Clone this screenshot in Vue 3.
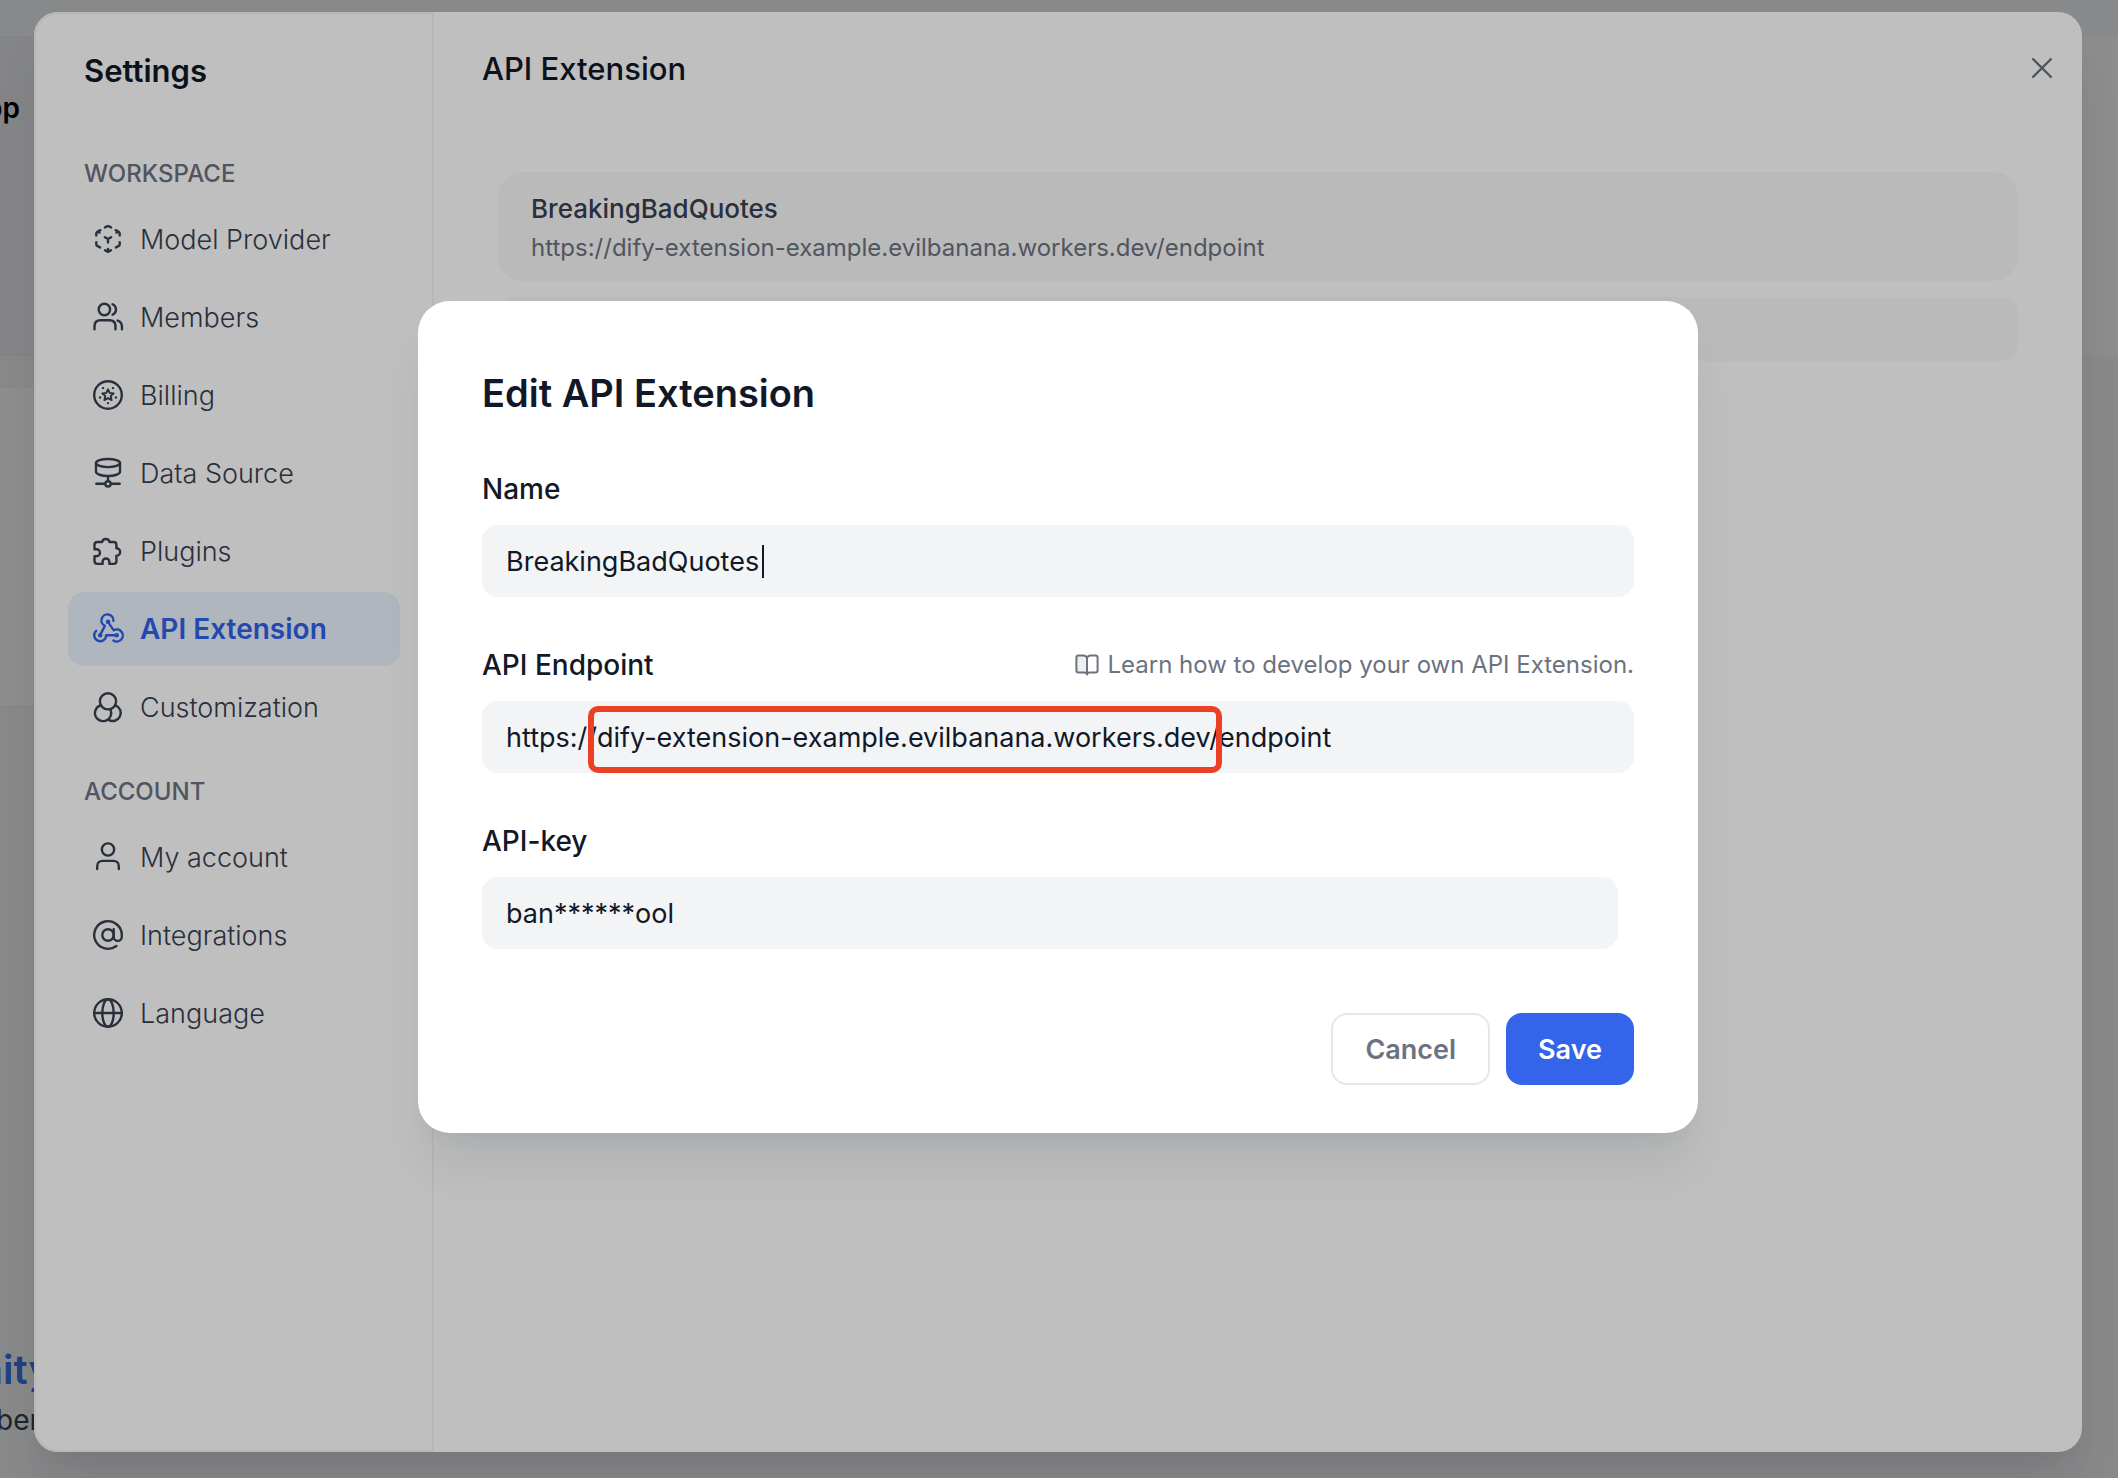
<script setup>
import { ref } from 'vue'

const groups = [
  {
    title: 'WORKSPACE',
    items: [
      { icon: 'model', label: 'Model Provider' },
      { icon: 'members', label: 'Members' },
      { icon: 'billing', label: 'Billing' },
      { icon: 'data', label: 'Data Source' },
      { icon: 'plugins', label: 'Plugins' },
      { icon: 'api', label: 'API Extension', active: true },
      { icon: 'custom', label: 'Customization' },
    ],
  },
  {
    title: 'ACCOUNT',
    items: [
      { icon: 'account', label: 'My account' },
      { icon: 'integrations', label: 'Integrations' },
      { icon: 'language', label: 'Language' },
    ],
  },
]

const icons = {
  model:
    '<path d="M9.9 4.3 11.2 3.6Q12 3.2 12.8 3.6L14.1 4.3M6.9 6.1 5.1 7M4.2 9.6V8.2L5.1 7 6.3 7.7M17.1 6.1 18.9 7M19.8 9.6V8.2L18.9 7 17.7 7.7M4.2 14.2V15.6Q4.2 16.3 4.8 16.6L6.7 17.6M19.8 14.2V15.6Q19.8 16.3 19.2 16.6L17.3 17.6M9.9 10.8 12 12 14.1 10.8M12 12V14.4M12 18.6V20.6M10 19.5 12 20.6 14 19.5"/>',
  members:
    '<circle cx="9.6" cy="7" r="3.8"/><path d="M3 20.2V18.2Q3 14.2 7 14.2H13Q17 14.2 17 18.2V20.2M15 3.5A3.8 3.8 0 0 1 15 10.5M18.4 14.4Q21.3 15.4 21.3 18.4V20.2"/>',
  billing:
    '<circle cx="12" cy="12" r="9.2"/><path stroke-width="1.3" d="m12 8.2 1.1 2.4 2.7.3-2 1.8.6 2.7-2.4-1.3-2.4 1.3.6-2.7-2-1.8 2.7-.3Z"/><g fill="currentColor" stroke="none"><circle cx="8.7" cy="7.4" r=".8"/><circle cx="15.3" cy="7.4" r=".8"/><circle cx="6.7" cy="13.7" r=".8"/><circle cx="17.3" cy="13.7" r=".8"/><circle cx="12" cy="17.4" r=".8"/></g>',
  data:
    '<ellipse cx="12" cy="5.4" rx="8" ry="2.7"/><path d="M4 5.4V11.2C4 12.7 7.6 14 12 14S20 12.7 20 11.2V5.4M12 14V17.4M4.2 19.2H10M14 19.2H19.8"/><circle cx="12" cy="19.2" r="1.8"/>',
  plugins:
    '<path d="M8.1 6A2.5 2.5 0 0 1 13 6H15.8Q17.6 6 17.6 7.8V10.2A2.4 2.4 0 0 1 17.6 15.2V18.9Q17.6 20.6 15.8 20.6H12.9V19.2A2.2 2.2 0 0 0 8.4 19.2V20.6H4.9Q3 20.6 3 18.7V15.5H4.3A2.3 2.3 0 0 0 4.3 10.8H3V7.8Q3 6 4.9 6Z"/>',
  api:
    '<path d="M15.6 6.6A4 4 0 1 0 9.9 9.9L7 15.6M12 7.2 15.8 12.9A4 4 0 1 1 15.6 19.6M17.7 16.2H10.8A4 4 0 1 1 4.1 13.2"/><g fill="currentColor" stroke="none"><circle cx="12" cy="7.2" r="1.5"/><circle cx="6.8" cy="16.2" r="1.5"/><circle cx="17.8" cy="16.2" r="1.5"/></g>',
  custom:
    '<circle cx="12" cy="8.2" r="5.4"/><path d="M7 10.9A5.4 5.4 0 1 0 13.5 18.5C14.4 16.6 14.2 14.8 13.4 13.6M17 10.9A5.4 5.4 0 1 1 12.2 20.5"/>',
  account:
    '<circle cx="12" cy="7" r="4.1"/><path d="M4.8 20V18.2Q4.8 14.6 8.6 14.6H15.4Q19.2 14.6 19.2 18.2V20"/>',
  integrations:
    '<circle cx="12" cy="12" r="3.8"/><path d="M15.8 8.2V13.2A2.7 2.7 0 0 0 21.2 13.2V12A9.2 9.2 0 1 0 17.6 19.3"/>',
  language:
    '<circle cx="12" cy="12" r="9.2"/><path d="M2.8 12H21.2"/><ellipse cx="12" cy="12" rx="3.8" ry="9.2"/>',
}

const name = ref('BreakingBadQuotes')
const endpoint = ref('https://dify-extension-example.evilbanana.workers.dev/endpoint')
const apiKey = ref('ban******ool')
</script>

<template>
  <div class="page">
    <div class="backdrop" aria-hidden="true">
      <div class="topbar"></div>
      <div class="hero">
        <div class="hero-card"><span>App</span></div>
      </div>
      <div class="gap"></div>
      <div class="tile"></div>
      <div class="footer">
        <strong>Community</strong>
        <span>member</span>
      </div>
    </div>

    <div class="overlay settings-overlay">
      <section class="settings">
        <nav class="sidebar">
          <h1>Settings</h1>
          <div v-for="g in groups" :key="g.title" class="group">
            <h2>{{ g.title }}</h2>
            <a
              v-for="item in g.items"
              :key="item.label"
              href="#"
              class="item"
              :class="{ active: item.active }"
            >
              <svg viewBox="0 0 24 24" v-html="icons[item.icon]"></svg>
              <span>{{ item.label }}</span>
            </a>
          </div>
        </nav>
        <main class="content">
          <header>
            <h2>API Extension</h2>
            <button type="button" class="close" aria-label="Close">
              <svg viewBox="0 0 18 18"><path d="M1 1 17 17M17 1 1 17" /></svg>
            </button>
          </header>
          <div class="list">
            <article class="card">
              <h3>{{ name }}</h3>
              <p>{{ endpoint }}</p>
            </article>
            <button type="button" class="add" aria-label="Add"></button>
          </div>
        </main>
      </section>
    </div>

    <div class="overlay dialog-overlay">
      <form class="dialog" @submit.prevent>
        <h2>Edit API Extension</h2>
        <div class="field">
          <div class="label-row"><label for="name">Name</label></div>
          <div class="control">
            <input id="name" v-model="name" type="text" />
            <i class="caret"></i>
          </div>
        </div>
        <div class="field">
          <div class="label-row">
            <label for="endpoint">API Endpoint</label>
            <a href="#" class="learn">
              <svg viewBox="0 0 24 24">
                <path fill="#eeeff1" stroke="none" d="M2 3H9.5L12 5V20H2Z" />
                <path d="M12 5Q11 2.4 8.5 2.4H3.4Q1.4 2.4 1.4 4.4V17.4Q1.4 19.4 3.4 19.4H9.6Q11.4 19.4 12 21.6 12.6 19.4 14.4 19.4H20.6Q22.6 19.4 22.6 17.4V4.4Q22.6 2.4 20.6 2.4H15.5Q13 2.4 12 5ZM12 5V20.6" />
              </svg>
              <span>Learn how to develop your own API Extension.</span>
            </a>
          </div>
          <div class="control">
            <input id="endpoint" v-model="endpoint" type="text" />
            <i class="marker"></i>
          </div>
        </div>
        <div class="field">
          <div class="label-row"><label for="key">API-key</label></div>
          <div class="control short"><input id="key" v-model="apiKey" type="text" /></div>
        </div>
        <div class="actions">
          <button type="button" class="cancel">Cancel</button>
          <button type="submit" class="save">Save</button>
        </div>
      </form>
    </div>
  </div>
</template>

<style>
body {
  margin: 0;
}
</style>

<style scoped>
* {
  box-sizing: border-box;
}
.page {
  position: relative;
  min-height: 100vh;
  overflow: hidden;
  background: #f3f4f6;
  color: #111827;
  font-family: Inter, 'Liberation Sans', sans-serif;
  font-size: 27px;
}
h1, h2, h3, p {
  margin: 0;
}
a {
  color: inherit;
  text-decoration: none;
}
button, input {
  font: inherit;
  border: 0;
}
svg {
  flex: none;
  fill: none;
  stroke: currentColor;
  stroke-width: 1.6;
  stroke-linecap: round;
  stroke-linejoin: round;
}

/* Page behind the dialogs */
.backdrop {
  display: flex;
  flex-direction: column;
}
.topbar {
  height: 36px;
}
.hero {
  height: 320px;
  background: #fbfbfb;
}
.hero-card {
  display: flex;
  justify-content: flex-end;
  width: 50%;
  height: 320px;
  padding: 51px 1039px 0 0;
  border-top: 1px solid #e8eaed;
  border-bottom: 1px solid #e5e7eb;
  background: #eceef2;
  color: #000;
  font-size: 28px;
  font-weight: 600;
  line-height: 40px;
}
.gap {
  height: 32px;
}
.tile {
  width: 50%;
  height: 320px;
  border-bottom: 2px solid #eaecf0;
  background: #fdfdfd;
}
.footer {
  display: flex;
  flex-direction: column;
  align-items: flex-end;
  width: 52px;
  padding-top: 634px;
}
.footer strong {
  color: #3b76e8;
  font-size: 40px;
  font-weight: 600;
  line-height: 56px;
}
.footer span {
  padding-right: 12px;
  color: #374151;
  font-size: 28px;
  line-height: 44px;
}

.overlay {
  position: absolute;
  inset: 0;
  display: flex;
  background: rgba(0, 0, 0, 0.25);
}
.settings-overlay {
  padding: 12px 36px 26px 34px;
}
.settings {
  display: flex;
  flex: 1;
  border-radius: 24px;
  background: #fff;
  box-shadow: 0 40px 48px -8px rgba(16, 24, 40, 0.1), 0 16px 16px -8px rgba(16, 24, 40, 0.03);
}
.sidebar {
  width: 400px;
  padding: 34px 32px 0;
  border: 2px solid #f3f4f6;
  border-radius: 24px 0 0 24px;
}
.sidebar h1 {
  margin-bottom: 62px;
  padding-left: 16px;
  font-size: 31px;
  font-weight: 600;
  line-height: 46px;
}
.group {
  display: flex;
  flex-direction: column;
  gap: 4px;
  margin-bottom: 30px;
}
.group h2 {
  margin-bottom: 6px;
  padding-left: 16px;
  color: #6b7280;
  font-size: 24px;
  font-weight: 500;
  line-height: 36px;
}
.item {
  display: flex;
  align-items: center;
  gap: 14px;
  height: 74px;
  padding: 0 22px;
  border-radius: 16px;
  color: #374151;
  font-weight: 300;
  white-space: nowrap;
}
.item svg {
  width: 36px;
  height: 36px;
}
.item.active {
  background: #eaf3fc;
  color: #3162e8;
  font-size: 28px;
  font-weight: 600;
}
.content {
  flex: 1;
  min-width: 0;
}
header {
  display: flex;
  align-items: center;
  justify-content: space-between;
  height: 112px;
  padding: 0 30px 0 48px;
}
header h2 {
  padding-top: 2px;
  font-size: 31px;
  font-weight: 500;
  line-height: 48px;
}
.close {
  display: flex;
  padding: 0;
  background: none;
  color: #6b7280;
}
.close svg {
  width: 20px;
  height: 20px;
  stroke-width: 2;
}
.list {
  display: flex;
  flex-direction: column;
  gap: 16px;
  padding: 48px 64px;
}
.card {
  padding: 18px 33px 12px;
  border-radius: 24px;
  background: #f9f9fa;
}
.card h3 {
  color: #374151;
  font-size: 26px;
  font-weight: 500;
  line-height: 37px;
}
.card p {
  color: #6b7280;
  font-size: 24px;
  line-height: 42px;
}
.add {
  height: 64px;
  border-radius: 16px;
  background: #f9f9fa;
}

.dialog-overlay {
  align-items: center;
  justify-content: center;
  padding: 0 2px 44px 0;
}
.dialog {
  width: 1280px;
  max-width: 100%;
  padding: 64px 64px 48px;
  border-radius: 32px;
  background: #fff;
  box-shadow: 0 40px 48px -8px rgba(16, 24, 40, 0.08), 0 16px 16px -8px rgba(16, 24, 40, 0.03);
}
.dialog h2 {
  margin-bottom: 32px;
  font-size: 38px;
  font-weight: 600;
  line-height: 56px;
}
.field {
  margin-bottom: 32px;
}
.label-row {
  display: flex;
  align-items: center;
  justify-content: space-between;
  line-height: 72px;
}
.label-row label {
  font-size: 28px;
  font-weight: 500;
}
.learn {
  display: flex;
  align-items: center;
  gap: 8px;
  color: #6b7280;
  font-size: 24px;
}
.learn svg {
  width: 24px;
  height: 24px;
  stroke-width: 2;
}
.control {
  position: relative;
}
.control.short {
  margin-right: 16px;
}
.control input {
  display: block;
  width: 100%;
  height: 72px;
  padding: 0 24px;
  border-radius: 16px;
  outline: none;
  background: #f3f4f6;
  color: #111827;
}
.caret {
  position: absolute;
  top: 20px;
  left: 280px;
  width: 2px;
  height: 33px;
  background: #111827;
}
.marker {
  position: absolute;
  top: 5px;
  left: 106px;
  width: 634px;
  height: 67px;
  border: 6px solid #ec4025;
  border-radius: 10px;
  pointer-events: none;
}
.actions {
  display: flex;
  justify-content: flex-end;
  gap: 16px;
  padding-top: 32px;
}
.actions button {
  height: 72px;
  padding: 0 32px;
  border-radius: 16px;
  font-weight: 600;
}
.actions .cancel {
  border: 2px solid #e5e7eb;
  background: #fff;
  color: #6b7280;
}
.actions .save {
  background: #3364e9;
  color: #fff;
}
</style>
